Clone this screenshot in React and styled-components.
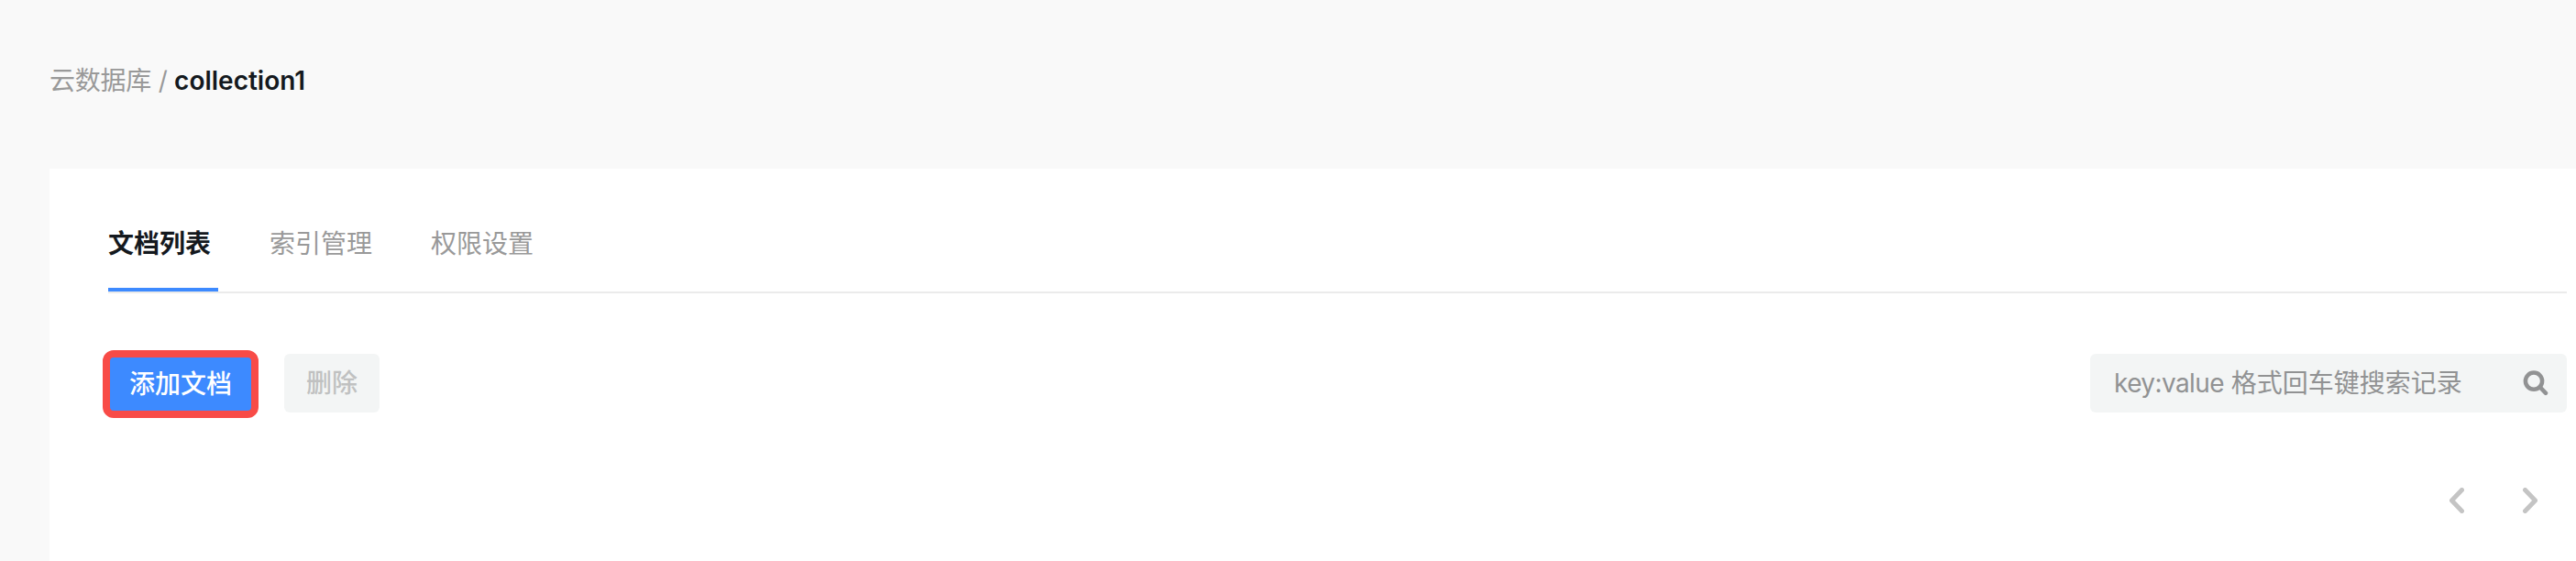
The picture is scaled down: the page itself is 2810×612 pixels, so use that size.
import React from 'react'
import styled, { createGlobalStyle } from 'styled-components'

const GlobalStyle = createGlobalStyle`
  * {
    box-sizing: border-box;
  }
  body {
    margin: 0;
    background: #f9f9f9;
    font-family: Inter, "Noto Sans CJK SC", sans-serif;
    font-size: 28px;
    line-height: 40px;
  }
`

const Page = styled.div`
  height: 612px;
  padding: 68px 0 0 54px;
  display: flex;
  flex-direction: column;
  overflow: hidden;
`

const Breadcrumb = styled.nav`
  height: 116px;
  flex-shrink: 0;
  display: flex;
  color: #999999;
  white-space: pre;
`

const Parent = styled.span`
  letter-spacing: -0.25px;
`

const Current = styled.span`
  color: #14191e;
  font-weight: 600;
`

const Panel = styled.main`
  flex: 1;
  padding: 48px 10px 0 64px;
  background: #ffffff;
`

const Tabs = styled.div`
  height: 88px;
  display: flex;
  gap: 56px;
  border-bottom: 2px solid #ebebeb;
`

const Tab = styled.div`
  width: 120px;
  padding-top: 14px;
  white-space: nowrap;
  cursor: pointer;
  color: ${({ $active }) => ($active ? '#14191e' : '#999999')};
  font-weight: ${({ $active }) => ($active ? 700 : 400)};
  border-bottom: 4px solid ${({ $active }) => ($active ? '#3d8aff' : 'transparent')};
`

const Toolbar = styled.div`
  height: 74px;
  margin: 62px 0 0 -6px;
  display: flex;
  align-items: center;
`

const Highlight = styled.div`
  width: 170px;
  height: 74px;
  margin-right: 28px;
  display: flex;
  border: 8px solid #f84b47;
  border-radius: 12px;
  background: #f84b47;
`

const Button = styled.button`
  width: ${({ $primary }) => ($primary ? '154px' : '104px')};
  height: ${({ $primary }) => ($primary ? '58px' : '64px')};
  margin-bottom: ${({ $primary }) => ($primary ? '0' : '2px')};
  padding: 0;
  border: none;
  border-radius: ${({ $primary }) => ($primary ? '4px' : '6px')};
  font: inherit;
  font-weight: 500;
  color: ${({ $primary }) => ($primary ? '#ffffff' : '#c0c1c1')};
  background: ${({ $primary }) => ($primary ? '#3d8aff' : '#f3f5f5')};
`

const Search = styled.div`
  width: 520px;
  height: 64px;
  margin: 0 0 2px auto;
  padding: 0 20px 0 26px;
  display: flex;
  align-items: center;
  justify-content: space-between;
  border-radius: 6px;
  color: #919293;
  background: #f3f5f5;
`

const SearchKey = styled.span`
  letter-spacing: -0.6px;
`

const Pager = styled.div`
  margin-top: 76px;
  padding-right: 32px;
  display: flex;
  justify-content: flex-end;
  gap: 64px;
`

const tabs = ['文档列表', '索引管理', '权限设置']

const Arrow = ({ d }) => (
  <svg width="16" height="28" viewBox="0 0 16 28" fill="none">
    <path d={d} stroke="#c4c4c4" strokeWidth="5" strokeLinecap="round" strokeLinejoin="round" />
  </svg>
)

const SearchIcon = () => (
  <svg width="28" height="28" viewBox="0 0 28 28" fill="none" stroke="#919293">
    <circle cx="12" cy="11.7" r="9.1" strokeWidth="4.5" />
    <path d="M18.5 18.2L25 24.8" strokeWidth="4.5" strokeLinecap="round" />
  </svg>
)

const App = () => {
  return (
    <>
      <GlobalStyle />
      <Page>
        <Breadcrumb>
          <Parent>云数据库 / </Parent>
          <Current>collection1</Current>
        </Breadcrumb>
        <Panel>
          <Tabs>
            {tabs.map((name, i) => (
              <Tab key={name} $active={i === 0}>{name}</Tab>
            ))}
          </Tabs>
          <Toolbar>
            <Highlight>
              <Button $primary>添加文档</Button>
            </Highlight>
            <Button disabled>删除</Button>
            <Search>
              <span><SearchKey>key:value</SearchKey> 格式回车键搜索记录</span>
              <SearchIcon />
            </Search>
          </Toolbar>
          <Pager>
            <Arrow d="M13.5 2.5L2.5 14L13.5 25.5" />
            <Arrow d="M2.5 2.5L13.5 14L2.5 25.5" />
          </Pager>
        </Panel>
      </Page>
    </>
  )
}

export default App
